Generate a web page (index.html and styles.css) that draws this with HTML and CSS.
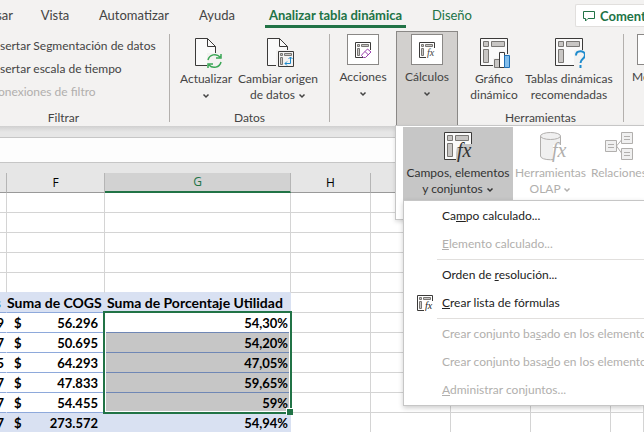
FILE: index.html
```html
<!DOCTYPE html>
<html lang="es">
<head>
<meta charset="utf-8">
<title>Analizar tabla dinámica</title>
<link rel="stylesheet" href="styles.css">
</head>
<body>
<svg class="defs" aria-hidden="true">
  <symbol id="table-lg" viewBox="0 0 32 32">
    <path class="paper" d="M2.5 1.5h27v27h-27z"/>
    <path class="cell" d="M5.5 4.5h5v5h-5zM13.500 4.500h13v5h-13zM5.500 12.500h5v13h-5z"/>
  </symbol>
  <symbol id="table-sm" viewBox="0 0 16 16">
    <path class="frame" d="M.5 15.500V.5h15v15z"/>
    <path class="cell" d="M2.500 2.500h2v2h-2zM6.500 2.500h7v2h-7zM2.500 6.500h2v7h-2z"/>
  </symbol>
  <symbol id="page" viewBox="0 0 32 32">
    <path class="paper" d="M5.500 1.500h12l8 8v19h-20z"/>
    <path class="frame" d="M17.500 1.500v8h8"/>
  </symbol>
  <symbol id="chevron" viewBox="0 0 8 6"><path class="chev" d="M1.500 1.500 4 4l2.500-2.500"/></symbol>
</svg>
<header class="ribbon">
  <nav class="tabs">
    <a class="tab tab-first" href="#">Revisar</a>
    <a class="tab" href="#">Vista</a>
    <a class="tab" href="#">Automatizar</a>
    <a class="tab" href="#">Ayuda</a>
    <a class="tab active" href="#"><span>Analizar tabla dinámica</span></a>
    <a class="tab green" href="#">Diseño</a>
    <button class="comments" type="button"><svg width="12" height="12" viewBox="0 0 12 12"><path d="M.5 1.500h11v7H5L2.500 11V8.500h-2z"/></svg>Comentarios</button>
  </nav>
  <div class="groups">
    <section class="group filter">
      <div class="links">
        <button type="button">Insertar Segmentación de datos</button>
        <button type="button">Insertar escala de tiempo</button>
        <button type="button" disabled>Conexiones de filtro</button>
      </div>
      <h2>Filtrar</h2>
    </section>
    <section class="group data">
      <div class="tools">
        <button class="tool refresh" type="button">
          <svg class="icon"><use href="#page"/><path class="knock" d="M17 16h13v16H17z"/><path class="sync" d="M18 23a7 7 0 0 1 12-3M31 25a7 7 0 0 1-12 3M31 17v4h-5M18 31v-4h5"/></svg>
          <span>Actualizar</span><svg class="chevron"><use href="#chevron"/></svg>
        </button>
        <button class="tool source" type="button">
          <svg class="icon"><use href="#page"/><path class="knock" d="M14 13h18v18H14z"/><svg x="16" y="14" width="16" height="16"><use href="#table-sm"/><path class="arrows" d="M12.500 6v6.500H7M10.500 8l2-2 2 2M9 10.500l-2 2 2 2"/></svg></svg>
          <span>Cambiar origen<br>de datos <svg class="chevron"><use href="#chevron"/></svg></span>
        </button>
      </div>
      <h2>Datos</h2>
    </section>
    <section class="group collapsed">
      <button class="tool actions" type="button">
        <span class="box"><svg width="16" height="16"><use href="#table-sm"/><path class="wipe" d="M8 8h8v8H8z"/><path class="eraser" d="M7.500 12l5-5 3.500 3-5.500 5.500H8.500L6.500 13.500zM10 9.500l3.500 3.500"/></svg></span>
        <span>Acciones</span><svg class="chevron"><use href="#chevron"/></svg>
      </button>
      <div class="anchor">
        <button class="tool open" type="button" aria-expanded="true">
          <span class="box"><svg width="16" height="16"><use href="#table-sm"/><path class="wipe" d="M7 6h9v10H7z"/><text class="fx fx-sm" x="8" y="14">fx</text></svg></span>
          <span>Cálculos</span><svg class="chevron"><use href="#chevron"/></svg>
        </button>
        <div class="flyout">
          <button class="tool fields" type="button" aria-expanded="true">
            <svg class="icon"><use href="#table-lg"/><path class="halo" d="M15 16h4v-3h11v9h1v8H14v-8z"/><text class="fx" x="15" y="26">fx</text></svg>
            <span>Campos, elementos<br>y conjuntos <svg class="chevron"><use href="#chevron"/></svg></span>
          </button>
          <button class="tool olap" type="button" disabled>
            <svg class="icon" viewBox="0 0 32 32"><path class="soft" d="M5.500 5v20c0 5 20 5 20 0V5"/><ellipse class="soft" cx="15.500" cy="5" rx="10" ry="3.500"/><path class="knock" d="M18 14h13v17H18z"/><text class="fx" x="17" y="26">fx</text></svg>
            <span>Herramientas<br>OLAP <svg class="chevron"><use href="#chevron"/></svg></span>
          </button>
          <button class="tool relations" type="button" disabled>
            <svg class="icon" viewBox="0 0 32 32"><path class="soft" d="M2.500 9.500h11v11h-11zM18.500 1.500h11v11h-11zM18.500 17.500h11v11h-11zM13.500 15l5-6M13.500 15l5 7M5 13.500h6M5 16.500h6M21 5.500h6M21 8.500h6M21 21.500h6M21 24.500h6"/></svg>
            <span>Relaciones</span>
          </button>
          <div class="menu" role="menu">
            <button role="menuitem" type="button">Ca<u>m</u>po calculado...</button>
            <button role="menuitem" type="button" disabled><u>E</u>lemento calculado...</button>
            <hr>
            <button role="menuitem" type="button">Orden de <u>r</u>esolución...</button>
            <button role="menuitem" type="button"><svg class="mark" width="16" height="16"><use href="#table-sm"/><path class="halo-white" d="M7 6h9v10H7z"/><text class="fx fx-sm" x="8" y="14">fx</text></svg><u>C</u>rear lista de fórmulas</button>
            <hr>
            <button role="menuitem" type="button" disabled>Crear conjunto ba<u>s</u>ado en los elementos de fila...</button>
            <button role="menuitem" type="button" disabled>Crear conjunto basa<u>d</u>o en los elementos de columna...</button>
            <button role="menuitem" type="button" disabled><u>A</u>dministrar conjuntos...</button>
          </div>
        </div>
      </div>
    </section>
    <section class="group aids">
      <div class="tools">
        <button class="tool chart" type="button">
          <svg class="icon"><use href="#table-lg"/><path class="knock" d="M15 21h6v-7h5v3h6v15H15z"/><path class="bar-grey" d="M16.500 22.500h5v8h-5z"/><path class="bar-white" d="M21.500 15.500h5v15h-5z"/><path class="bar-blue" d="M26.500 18.500h5v12h-5z"/></svg>
          <span>Gráfico<br>dinámico</span>
        </button>
        <button class="tool suggested" type="button">
          <svg class="icon"><use href="#table-lg"/><path class="knock" d="M21 13h11v18H21z"/><path class="question" d="M23 18.500c0-5.500 9-5.500 9-.5 0 4-4.500 3.500-4.500 8M27.500 28v3"/></svg>
          <span>Tablas dinámicas<br>recomendadas</span>
        </button>
      </div>
      <h2>Herramientas</h2>
    </section>
    <section class="group show">
      <button class="tool" type="button"><span class="box"></span><span>Mostrar</span></button>
    </section>
  </div>
</header>
<main>
  <div class="formula"><input type="text" aria-label="Barra de fórmulas"></div>
  <table class="sheet">
    <colgroup><col class="c-e"><col class="c-f"><col class="c-g"><col class="c-n"><col class="c-n"><col class="c-n"><col class="c-n"><col></colgroup>
    <thead><tr><th></th><th>F</th><th class="picked">G</th><th>H</th><th></th><th></th><th></th><th></th></tr></thead>
    <tbody>
      <tr><td></td><td></td><td></td><td></td><td></td><td></td><td></td><td></td></tr>
      <tr><td></td><td></td><td></td><td></td><td></td><td></td><td></td><td></td></tr>
      <tr><td></td><td></td><td></td><td></td><td></td><td></td><td></td><td></td></tr>
      <tr><td></td><td></td><td></td><td></td><td></td><td></td><td></td><td></td></tr>
      <tr class="before"><td></td><td></td><td></td><td></td><td></td><td></td><td></td><td></td></tr>
      <tr class="band names"><td><div class="end">s</div></td><td>Suma de COGS</td><td>Suma de Porcentaje Utilidad</td><td></td><td></td><td></td><td></td><td></td></tr>
      <tr class="row first"><td><div class="end">9</div></td><td><div class="money"><span>$</span><span>56.296</span></div></td><td>54,30%<span class="selection"></span></td><td></td><td></td><td></td><td></td><td></td></tr>
      <tr class="row"><td><div class="end">7</div></td><td><div class="money"><span>$</span><span>50.695</span></div></td><td>54,20%</td><td></td><td></td><td></td><td></td><td></td></tr>
      <tr class="row"><td><div class="end">5</div></td><td><div class="money"><span>$</span><span>64.293</span></div></td><td>47,05%</td><td></td><td></td><td></td><td></td><td></td></tr>
      <tr class="row"><td><div class="end">7</div></td><td><div class="money"><span>$</span><span>47.833</span></div></td><td>59,65%</td><td></td><td></td><td></td><td></td><td></td></tr>
      <tr class="row"><td><div class="end">7</div></td><td><div class="money"><span>$</span><span>54.455</span></div></td><td>59%</td><td></td><td></td><td></td><td></td><td></td></tr>
      <tr class="band total"><td><div class="end">7</div></td><td><div class="money"><span>$</span><span>273.572</span></div></td><td>54,94%</td><td></td><td></td><td></td><td></td><td></td></tr>
    </tbody>
  </table>
</main>
</body>
</html>
```
FILE: styles.css
```css
* { box-sizing: border-box; }
html { overflow: hidden; }
body {
  margin: 0;
  background: #fff;
  color: #444;
  font: 12px/16px Lato, "Open Sans", sans-serif;
}
button {
  border: 0;
  margin: 0;
  padding: 0;
  background: none;
  color: inherit;
  font: inherit;
  white-space: nowrap;
}
button:disabled { color: #b1afad; }
.defs { position: absolute; width: 0; height: 0; }

/* Ribbon tabs */
.ribbon { position: relative; background: #f3f2f1; }
.tabs {
  display: grid;
  grid-template-columns: 27px 56px 102px 64px 173px 60px minmax(0, 1fr);
  height: 31px;
  font-size: 13px;
}
.tab {
  display: flex;
  justify-content: center;
  padding-top: 7px;
  color: #444;
  text-decoration: none;
  white-space: nowrap;
}
.tab-first { justify-content: flex-end; padding-right: 14px; }
.tab.green, .tab.active { color: #217346; }
.active { font-weight: 700; }
.active span { height: 21px; padding: 0 4px; border-bottom: 3px solid #217346; }
.comments {
  display: flex;
  align-items: center;
  gap: 5px;
  height: 23px;
  margin: 4px 0 0 93px;
  padding-left: 7px;
  overflow: hidden;
  border: 1px solid #e1dfdd;
  border-right: 0;
  border-radius: 2px 0 0 2px;
  background: #fff;
  color: #217346;
  font-weight: 700;
}
.comments svg { flex: none; }
.comments path { fill: none; stroke: #217346; }

/* Ribbon groups */
.groups { display: flex; height: 95px; }
.group {
  display: flex;
  flex: none;
  flex-direction: column;
  justify-content: space-between;
}
.filter, .data, .aids { margin: 3px 0 4px; border-right: 1px solid #b3b0ad; }
.filter { width: 170px; }
.data { width: 160px; }
.aids { width: 166px; }
.group.show {
  flex: 1;
  align-items: flex-start;
  min-width: 0;
  padding: 3px 0 0 8px;
  overflow: hidden;
}
.group h2 {
  margin: 0 0 -4px;
  font-size: 12px;
  font-weight: 400;
  line-height: 16px;
  text-align: center;
}
.filter h2 { padding-right: 42px; }
.links {
  display: flex;
  flex-direction: column;
  align-items: flex-start;
  margin-left: -10px;
}
.links button { height: 23px; }
.tools { display: flex; padding-top: 3px; }
.tool {
  display: flex;
  flex: none;
  flex-direction: column;
  align-items: center;
  gap: 2px;
  line-height: 16px;
  text-align: center;
}
.icon { width: 32px; height: 32px; }
.chevron { width: 8px; height: 6px; }
.tool > .chevron { margin-top: 4px; }
.refresh { width: 72px; }
.source { width: 72px; }
.collapsed { flex-direction: row; }
.collapsed > .tool { width: 66px; padding-top: 3px; }
.box {
  display: grid;
  place-content: center;
  width: 32px;
  height: 31px;
  margin-bottom: 2px;
  border: 1px solid #8a8886;
  background: #fff;
}
.anchor { width: 62px; }
.open {
  width: 62px;
  height: 95px;
  padding-top: 2px;
  border: 1px solid #8a8886;
  border-bottom: 0;
  background: #d2d0ce;
}
.chart { width: 72px; }
.suggested { width: 78px; }

/* Icon paint */
.paper { fill: #fafafa; stroke: #3b3a39; }
.frame { fill: none; stroke: #3b3a39; }
.cell { fill: #c8c6c4; stroke: #797774; }
.knock { fill: #f3f2f1; }
.wipe, .halo-white { fill: #fff; }
.halo { fill: #c6c6c6; }
.chev { fill: none; stroke: currentColor; stroke-width: 1.500; }
.sync { fill: none; stroke: #3aa655; stroke-width: 1.500; }
.arrows { fill: none; stroke: #1e8bcd; }
.eraser { fill: #fff; stroke: #9b3fae; }
.bar-grey { fill: #c8c6c4; stroke: #797774; }
.bar-white { fill: #fff; stroke: #3b3a39; }
.bar-blue { fill: #83beec; stroke: #1e6fb5; }
.question { fill: none; stroke: #1e8bcd; stroke-width: 2; }
.soft { fill: #f0f0f0; stroke: #b1afad; }
.fx { fill: currentColor; font: italic 20px "Liberation Serif", serif; }
.fx-sm { font-size: 10px; }

/* Flyout of the collapsed group */
.flyout {
  position: absolute;
  z-index: 2;
  top: 125px;
  right: 0;
  left: 395px;
  display: flex;
  height: 95px;
  padding: 1px 0 1px 7px;
  border: 1px solid #c6c6c6;
  border-right: 0;
  background: #fff;
  box-shadow: 0 2px 4px #0002;
}
.flyout .tool { height: 73px; padding-top: 4px; }
.flyout .knock { fill: #fff; }
.flyout .fields { width: 110px; background: #c6c6c6; color: #333; }
.flyout .olap { width: 75px; }
.flyout .relations {
  flex: 1;
  align-items: flex-start;
  min-width: 0;
  padding-left: 3px;
  overflow: hidden;
}
.relations .icon { margin-left: 12px; }
.menu {
  position: absolute;
  top: 74px;
  right: 0;
  left: 7px;
  display: flex;
  flex-direction: column;
  padding: 1px 0;
  border: 1px solid #c6c6c6;
  border-right: 0;
  background: #fff;
  box-shadow: 0 2px 5px #0003;
  color: #222;
}
.menu button {
  position: relative;
  height: 28px;
  padding-left: 38px;
  overflow: hidden;
  text-align: left;
}
.menu hr {
  width: 100%;
  height: 1px;
  margin: 1px 0;
  border: 0;
  border-left: 33px solid #fff;
  background: #e1dfdd;
}
.mark { position: absolute; top: 6px; left: 13px; }

/* Formula bar */
.formula {
  height: 47px;
  padding: 11px 0 10px;
  background: linear-gradient(#d0d0d0, #e6e6e6 6px);
}
.formula input {
  display: block;
  width: 100%;
  height: 26px;
  border: 1px solid #c6c6c6;
  border-width: 1px 0;
  background: #fdfdfd;
}

/* Worksheet */
.sheet {
  width: 100%;
  border-spacing: 0;
  table-layout: fixed;
  color: #000;
  font: 700 13px/18px Lato, sans-serif;
}
.c-e { width: 7px; }
.c-f { width: 98px; }
.c-g { width: 186px; }
.c-n { width: 80px; }
th, td {
  height: 20px;
  padding: 0;
  border: 0 solid #d4d4d4;
  border-width: 0 1px 1px 0;
  white-space: nowrap;
}
th {
  border-color: #b5b5b5;
  border-bottom-color: #999;
  background: #e6e6e6;
  font: 400 12px/18px "Open Sans", sans-serif;
}
.picked {
  border-bottom: 2px solid #217346;
  background: #d2d2d2;
  color: #217346;
}
.before td:nth-child(-n+3) { border-bottom-color: #d9e1f2; }
.band td:nth-child(-n+3) { border-right-color: #d9e1f2; background: #d9e1f2; }
.names { font-size: 14px; }
.names td:nth-child(-n+3) { border-bottom-color: #8ea9db; }
.names td:nth-child(3) { padding-left: 2px; }
.names .end { padding-right: 5px; color: #2e75b6; }
.row td:nth-child(-n+3) { border-right-color: #fff; border-bottom-color: #8ea9db; }
.row td:nth-child(3), .total td:nth-child(3) { padding-right: 2px; text-align: right; }
.row:not(.first) td:nth-child(3) { background: #c6c6c6; }
.row td:nth-child(3) { border-bottom-color: #6f87b5; }
.first td:nth-child(3) { position: relative; }
.end { display: flex; justify-content: flex-end; padding-right: 2px; }
.money { display: flex; justify-content: space-between; padding: 0 6px 0 7px; }
.selection {
  position: absolute;
  top: -2px;
  left: -2px;
  width: 189px;
  height: 103px;
  border: 2px solid #217346;
  box-shadow: inset 0 0 0 1px #fff;
}
.selection::after {
  content: "";
  position: absolute;
  right: -3px;
  bottom: -3px;
  width: 6px;
  height: 6px;
  border: 1px solid #fff;
  border-width: 1px 0 0 1px;
  background: #217346;
}
```
